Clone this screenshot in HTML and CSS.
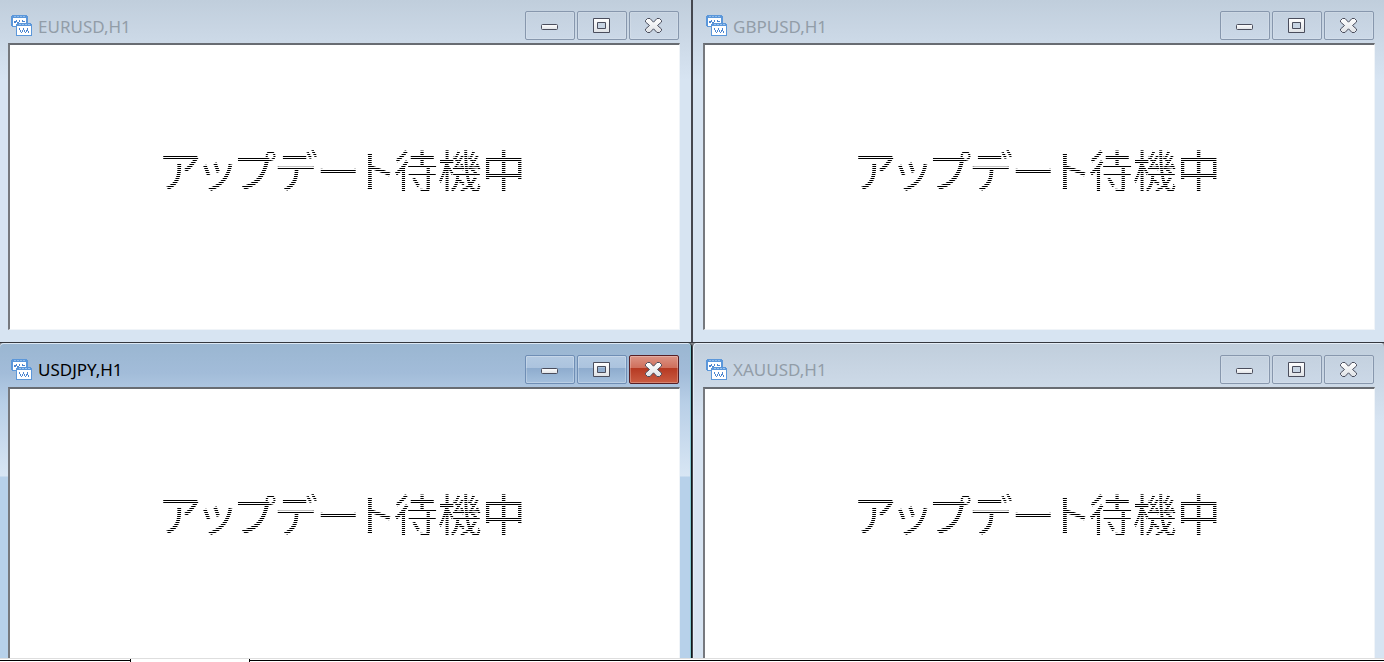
FILE: index.html
```
<!doctype html>
<html lang="ja">

<head>
    <meta charset="UTF-8">
    <title>チャート</title>
    <link rel="stylesheet" href="styles.css">
</head>

<body>
    <!-- 共通アイコン -->
    <svg class="symbols" aria-hidden="true">
        <defs>
            <linearGradient id="face" x1="0" y1="0" x2="0" y2="1">
                <stop offset="0" stop-color="#ffffff"/>
                <stop offset="1" stop-color="#dfe2e6"/>
            </linearGradient>
        </defs>
        <symbol id="chart" viewBox="0 0 21 21">
            <path fill="#5b97da" d="M1 0h15v1h1v11H1v-1H0V1h1z"/>
            <path fill="#8fbcec" d="M3 1h2v1H3zM6 1h2v1H6zM9 1h2v1H9zM12 1h2v1h-2z"/>
            <path fill="#fff" d="M2 3h13v8H2z"/>
            <path fill="#4c86d0" d="M3 6h2v2H3zM5 5h1v2H5zM6 7h2v1H6zM8 5h1v2H8zM11 5h1v2h-1zM12 6h2v1h-2z"/>
            <path fill="#5b97da" d="M6 8h14v1h1v12H5V9h1z"/>
            <path fill="#9cc4ef" d="M8 9h2v1H8zM11 9h2v1h-2zM14 9h2v1h-2zM17 9h2v1h-2z"/>
            <path fill="#fff" d="M6 11h14v9H6z"/>
            <path fill="#4c86d0" d="M8 13h1v2H8zM9 15h1v2H9zM10 17h1v1h-1zM11 15h1v2h-1zM12 13h1v2h-1zM13 15h1v2h-1zM14 17h1v1h-1zM15 15h1v2h-1zM16 13h1v3h-1zM17 16h1v2h-1z"/>
        </symbol>
        <symbol id="min" viewBox="0 0 20 17">
            <rect x="1.500" y="7.500" width="16" height="5" rx="1" fill="url(#face)" stroke="#4a4d5c"/>
        </symbol>
        <symbol id="max" viewBox="0 0 20 17">
            <path fill="url(#face)" fill-rule="evenodd" stroke="#4a4d5c" d="M1.500 1.500h16v14h-16zM5.500 5.500v6h8v-6z"/>
        </symbol>
        <symbol id="close" viewBox="0 0 20 17">
            <path fill="url(#face)" stroke="#4a4d5c" stroke-linejoin="round" d="M3.500 1.500H6L9.500 5.200 13 1.500h2.500l2 2V5L13.500 8.500l4 3.500v1.500l-2 2H13L9.500 11.800 6 15.500H3.500l-2-2V12L5.500 8.500 1.500 5V3.500z"/>
        </symbol>
    </svg>

    <main class="workspace">
        <section class="window">
            <header class="title-bar">
                <svg class="chart-icon"><use href="#chart"/></svg>
                <h2 class="title">EURUSD,H1</h2>
                <div class="controls">
                    <button class="control" aria-label="最小化"><svg><use href="#min"/></svg></button>
                    <button class="control" aria-label="最大化"><svg><use href="#max"/></svg></button>
                    <button class="control" aria-label="閉じる"><svg><use href="#close"/></svg></button>
                </div>
            </header>
            <div class="client"><p class="message">アップデート待機中</p></div>
        </section>
        <section class="window">
            <header class="title-bar">
                <svg class="chart-icon"><use href="#chart"/></svg>
                <h2 class="title">GBPUSD,H1</h2>
                <div class="controls">
                    <button class="control" aria-label="最小化"><svg><use href="#min"/></svg></button>
                    <button class="control" aria-label="最大化"><svg><use href="#max"/></svg></button>
                    <button class="control" aria-label="閉じる"><svg><use href="#close"/></svg></button>
                </div>
            </header>
            <div class="client"><p class="message">アップデート待機中</p></div>
        </section>
        <section class="window active">
            <header class="title-bar">
                <svg class="chart-icon"><use href="#chart"/></svg>
                <h2 class="title">USDJPY,H1</h2>
                <div class="controls">
                    <button class="control" aria-label="最小化"><svg><use href="#min"/></svg></button>
                    <button class="control" aria-label="最大化"><svg><use href="#max"/></svg></button>
                    <button class="control close" aria-label="閉じる"><svg><use href="#close"/></svg></button>
                </div>
            </header>
            <div class="client"><p class="message">アップデート待機中</p></div>
        </section>
        <section class="window">
            <header class="title-bar">
                <svg class="chart-icon"><use href="#chart"/></svg>
                <h2 class="title">XAUUSD,H1</h2>
                <div class="controls">
                    <button class="control" aria-label="最小化"><svg><use href="#min"/></svg></button>
                    <button class="control" aria-label="最大化"><svg><use href="#max"/></svg></button>
                    <button class="control" aria-label="閉じる"><svg><use href="#close"/></svg></button>
                </div>
            </header>
            <div class="client"><p class="message">アップデート待機中</p></div>
        </section>
    </main>
    <footer class="tabs">
        <span class="tab"></span>
    </footer>
</body>

</html>
```

FILE: styles.css
```
* {
    margin: 0;
    padding: 0;
    box-sizing: border-box;
}
body {
    display: flex;
    flex-direction: column;
    height: 100vh;
    overflow: hidden;
    background-color: #fff;
    font-family: "Noto Sans", "Noto Sans CJK JP", sans-serif;
}
.symbols {
    position: absolute;
    width: 0;
    height: 0;
}

/*ウィンドウを2列に並べる*/
.workspace {
    flex: 1;
    min-height: 0;
    overflow: hidden;
    display: grid;
    grid-template-columns: 1fr 1fr;
    align-content: start;
    background-color: #84878c;
}
.window {
    padding: 0 9px 12px 10px;
    border-left: 1px solid #45474f;
    border-bottom: 1px solid #34373e;
    border-radius: 4px 4px 0 0;
    background: linear-gradient(#c0cedc, #c9d6e4 30px, #d7e4f2 80px);
    box-shadow: inset 1px 1px #e4edf6;
}
.window:nth-child(odd) {
    padding: 0 11px 12px 8px;
    border-left: 0;
    border-right: 1px solid #45474f;
}
/*上段は画面の端に接する*/
.window:nth-child(-n + 2) {
    border-radius: 0;
    box-shadow: none;
}
.window.active {
    border-right-color: #10181c;
    background: linear-gradient(#9ab6d1, #a2bcd9 30px, #b8cfe7 60px, #d8e6f4 133px, #b7d1ea 134px);
    box-shadow: inset 0 1px #dce8f4, inset -1px 0 #7fc4cf;
}

/*タイトルバー*/
.title-bar {
    display: flex;
    align-items: center;
    gap: 6px;
    height: 43px;
    padding: 8px 1px 0 3px;
}
.window:nth-child(n + 3) .title-bar {
    height: 44px;
}
.chart-icon {
    width: 21px;
    height: 21px;
    shape-rendering: crispEdges;
}
.title {
    flex: 1;
    padding-top: 2px;
    font-size: 17px;
    font-weight: 400;
    line-height: 24px;
    color: #929da8;
}
.active .title {
    color: #000;
}
.controls {
    display: flex;
    gap: 2px;
}
.control {
    display: flex;
    align-items: center;
    justify-content: center;
    width: 50px;
    height: 29px;
    border: 1px solid #8797ad;
    border-radius: 2px;
    background: linear-gradient(#c4d1df, #cbd8e7);
    box-shadow: inset 0 0 0 1px rgba(255, 255, 255, .15);
}
.control svg {
    width: 20px;
    height: 17px;
}
.active .control {
    border-color: #6f8eb5;
    background: linear-gradient(#b4cae2, #abc3de 45%, #8eacce 46%, #a5c0dd);
    box-shadow: inset 0 0 0 1px rgba(255, 255, 255, .25);
}
.active .close {
    border-color: #571f25;
    background: linear-gradient(#dc9485, #cf6e5b 45%, #b63a23 46%, #ca5c42);
}

/*チャート領域*/
.client {
    height: 287px;
    padding-top: 91px;
    padding-right: 4px;
    border: 1px solid #f0f4f8;
    border-top: 2px solid #686c72;
    border-left: 2px solid #76797e;
    background-color: #fff;
}
/*1行おきに抜いた文字*/
.message {
    font-family: "Noto Sans CJK JP", sans-serif;
    font-size: 44px;
    font-weight: 400;
    font-feature-settings: "palt";
    line-height: 66px;
    text-align: center;
    color: transparent;
    background: repeating-linear-gradient(#000 0 1px, #fff 1px 2px);
    -webkit-background-clip: text;
    background-clip: text;
}

/*下端のタブ*/
.tabs {
    height: 4px;
    padding-left: 130px;
    border-top: 1px solid #dedede;
    background: linear-gradient(#fff 1px, #000 1px 2px, #fff 2px);
}
.tab {
    display: block;
    width: 120px;
    height: 3px;
    border: 1px solid #000;
    border-width: 0 1px;
    background-color: #fff;
}
```
